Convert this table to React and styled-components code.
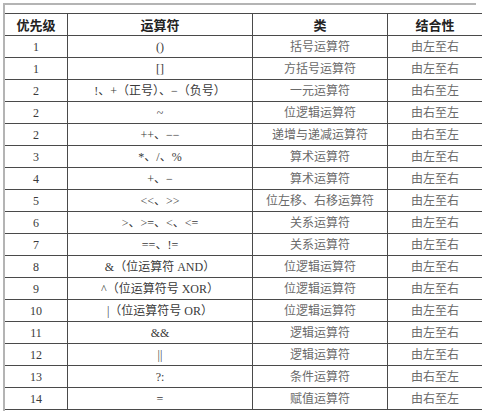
import React from "react";
import styled, { createGlobalStyle } from "styled-components";

const Global = createGlobalStyle`
  html, body { margin: 0; padding: 0; background: #ffffff; }
  body { width: 482px; height: 414px; overflow: hidden; }
`;

const Frame = styled.div`
  margin: 3px 0 0 3px;
  width: 473px;
  height: 408px;
  box-sizing: border-box;
  border-top: 2px solid #b4b4b4;
  border-left: 2px solid #b4b4b4;
  padding-top: 8px;
`;

const Table = styled.div`
  width: 477px;
  border-top: 1px solid #4a4a4a;
  font-family: "Liberation Serif", "Noto Sans CJK SC", serif;
`;

const Row = styled.div`
  display: grid;
  grid-template-columns: 63px 185px 135px 1fr;
  height: 22px;
  box-sizing: border-box;
  border-bottom: 1px solid #4a4a4a;
`;

const Cell = styled.div`
  display: flex;
  align-items: center;
  justify-content: center;
  box-sizing: border-box;
  border-right: ${(p) => (p.$last ? "none" : "1px solid #4a4a4a")};
  font-size: ${(p) => (p.$head ? "13px" : "12px")};
  font-weight: ${(p) => (p.$head ? 700 : 400)};
  color: ${(p) => (p.$head ? "#222" : p.$num ? "#3a3a3a" : "#6a6a6a")};
  white-space: nowrap;
  line-height: 1;
  padding-top: 1px;
`;

const rows = [
  ["1", "()", "括号运算符", "由左至右"],
  ["1", "[]", "方括号运算符", "由左至右"],
  ["2", "!、+（正号）、−（负号）", "一元运算符", "由右至左"],
  ["2", "~", "位逻辑运算符", "由右至左"],
  ["2", "++、−−", "递增与递减运算符", "由右至左"],
  ["3", "*、/、%", "算术运算符", "由左至右"],
  ["4", "+、−", "算术运算符", "由左至右"],
  ["5", "<<、>>", "位左移、右移运算符", "由左至右"],
  ["6", ">、>=、<、<=", "关系运算符", "由左至右"],
  ["7", "==、!=", "关系运算符", "由左至右"],
  ["8", "&（位运算符 AND）", "位逻辑运算符", "由左至右"],
  ["9", "^（位运算符号 XOR）", "位逻辑运算符", "由左至右"],
  ["10", "|（位运算符号 OR）", "位逻辑运算符", "由左至右"],
  ["11", "&&", "逻辑运算符", "由左至右"],
  ["12", "||", "逻辑运算符", "由左至右"],
  ["13", "?:", "条件运算符", "由右至左"],
  ["14", "=", "赋值运算符", "由右至左"],
];

export default function App() {
  return (
    <>
      <Global />
      <Frame>
        <Table>
          <Row>
            <Cell $head>优先级</Cell>
            <Cell $head>运算符</Cell>
            <Cell $head>类</Cell>
            <Cell $head $last>结合性</Cell>
          </Row>
          {rows.map((r, i) => (
            <Row key={i}>
              <Cell $num>{r[0]}</Cell>
              <Cell $num>{r[1]}</Cell>
              <Cell>{r[2]}</Cell>
              <Cell $last>{r[3]}</Cell>
            </Row>
          ))}
        </Table>
      </Frame>
    </>
  );
}
